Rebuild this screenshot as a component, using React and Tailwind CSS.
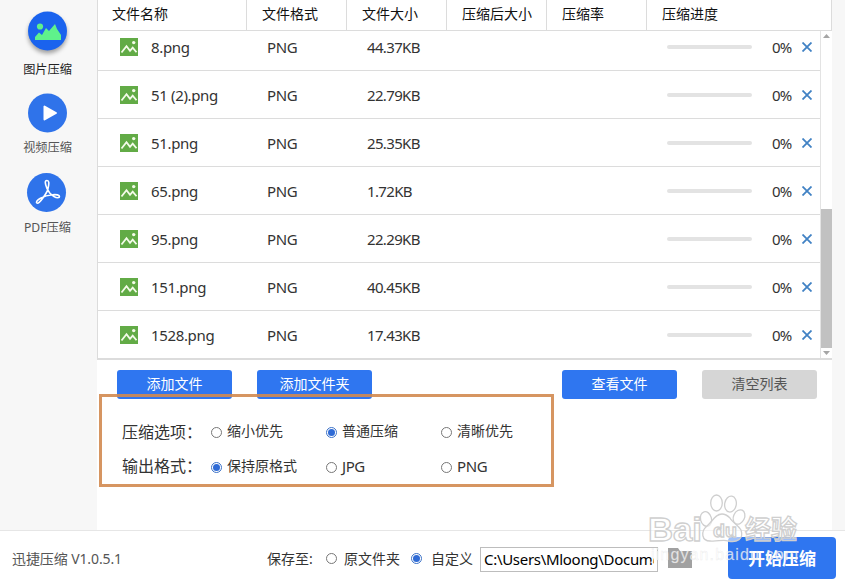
import React from "react";

const files = [
  ["8.png", "44.37KB"],
  ["51 (2).png", "22.79KB"],
  ["51.png", "25.35KB"],
  ["65.png", "1.72KB"],
  ["95.png", "22.29KB"],
  ["151.png", "40.45KB"],
  ["1528.png", "17.43KB"],
];

function FileIcon() {
  return (
    <svg width="18" height="18" viewBox="0 0 18 18" className="block shrink-0">
      <rect width="18" height="18" fill="#62ab46" />
      <path d="M1.5 14.5 L6.5 8.3 L10 12.8 L12.7 9.6 L16.5 14.3" fill="none" stroke="#f4fbe9" strokeWidth="1.8" />
      <circle cx="13.7" cy="4.6" r="1.7" fill="#f4fbe9" />
    </svg>
  );
}

function FileRow({ name, size, first, last }) {
  return (
    <div
      className={
        "flex shrink-0 items-center border-[#dcdcdc] text-[15px] tracking-[-0.45px] text-[#333] " +
        (first ? "h-10 pb-[7px] border-b" : last ? "h-12" : "h-12 border-b")
      }
    >
      <div className="flex w-[169px] items-center gap-[13px] pl-[22px]">
        <FileIcon />
        <span className="whitespace-pre tracking-[-0.35px]">{name}</span>
      </div>
      <div className="w-[100px] tracking-[-0.4px]">PNG</div>
      <div className="w-[300px] tracking-[-0.65px]">{size}</div>
      <div className="mr-5 h-1 w-[85px] rounded-full bg-[#e3e3e3]" />
      <div className="w-[30px] tracking-[-0.9px]">0%</div>
      <svg width="10" height="10" viewBox="0 0 10 10" className="block">
        <path d="M0.5 0.5 L9.5 9.5 M9.5 0.5 L0.5 9.5" stroke="#4182c4" strokeWidth="1.8" />
      </svg>
    </div>
  );
}

function Radio({ checked }) {
  return (
    <span
      className={
        "flex h-[11px] w-[11px] shrink-0 items-center justify-center rounded-full border bg-white " +
        (checked ? "border-[#3b72c8]" : "border-[#777]")
      }
    >
      {checked && <span className="h-[7px] w-[7px] rounded-full bg-[#2f6bd6]" />}
    </span>
  );
}

function Option({ label, checked, latin }) {
  return (
    <div className="flex w-[115px] shrink-0 items-center gap-[5px] whitespace-nowrap">
      <Radio checked={checked} />
      <span className={"-mt-0.5 " + (latin ? "text-[15px] tracking-[-0.4px]" : "text-[14px]")}>{label}</span>
    </div>
  );
}

function HeaderCell({ children, className }) {
  return <div className={"flex h-[30px] items-center border-[#dcdcdc] pb-0.5 " + className}>{children}</div>;
}

function Button({ children, className }) {
  return (
    <div className={"flex h-[29px] w-[115px] items-center justify-center rounded-[3px] pb-0.5 text-[14px] " + className}>
      {children}
    </div>
  );
}

function SideItem({ label, children, className }) {
  return (
    <div className={"flex h-20 flex-col items-center text-[12.2px] " + className}>
      {children}
      <span className="pt-px pl-px leading-4">{label}</span>
    </div>
  );
}

function Watermark() {
  return (
    <svg
      width="170"
      height="90"
      viewBox="0 0 170 90"
      className="pointer-events-none absolute left-[640px] top-[490px]"
      fontFamily='"Liberation Sans", "Noto Sans CJK SC", sans-serif'
    >
      <g fill="#ffffff" fillOpacity="0.55" stroke="#cfcfcf" strokeWidth="1.3" fontWeight="bold">
        <ellipse cx="66" cy="29" rx="5.5" ry="7.5" transform="rotate(-15 66 29)" />
        <ellipse cx="76.500" cy="13" rx="5.800" ry="8" />
        <ellipse cx="90.500" cy="14" rx="5.800" ry="8" transform="rotate(10 90 14)" />
        <ellipse cx="99" cy="27" rx="5.500" ry="7.5" transform="rotate(25 99 27)" />
        <path d="M82 24 C75 24 73 31 67 36 C60 42 62 51 70 51 C77 52 83 49 88 51 C97 53 104 49 101 40 C98 35 92 32 90 28 C87 25 85 24 82 24Z" />
        <text x="8" y="51" fontSize="33" textLength="54" lengthAdjust="spacingAndGlyphs">Bai</text>
        <text x="73" y="47" fontSize="19" textLength="24" lengthAdjust="spacingAndGlyphs">du</text>
        <text x="105" y="49" fontSize="26" textLength="52" lengthAdjust="spacingAndGlyphs">经验</text>
      </g>
      <text x="11" y="70" fontSize="16" fill="#ffffff" fillOpacity="0.75" stroke="#cccccc" strokeOpacity="0.35" strokeWidth="0.5" textLength="147">
        jingyan.baidu.com
      </text>
    </svg>
  );
}

export default function App() {
  return (
    <div className="relative flex h-[585px] w-[845px] flex-col overflow-hidden bg-white font-['Noto_Sans','Noto_Sans_CJK_SC',sans-serif] leading-5 text-[#333]">
      <div className="flex h-[530px] bg-[#f7f7f7]">
        <aside className="w-[97px] shrink-0 pt-[11px] pr-[3px]">
          <SideItem label="图片压缩" className="text-[#222]">
            <svg width="46" height="50" viewBox="0 0 46 50">
              <circle cx="23.500" cy="20" r="19.500" fill="#1a63ee" className="drop-shadow-[0_3px_2px_rgba(0,0,0,0.35)]" />
              <circle cx="16" cy="15.500" r="3.100" fill="#5ff28b" />
              <path d="M11 29 V26 L15 21.500 L18 24 L22 17 L25 20 L31 13 L33 18 L37 24 V29Z" fill="#5ff28b" />
            </svg>
          </SideItem>
          <SideItem label="视频压缩" className="text-[#555]">
            <svg width="46" height="48" viewBox="0 0 46 48">
              <circle cx="23.500" cy="22" r="19.500" fill="#2f73ea" />
              <path d="M20.500 15.500 V28.500 L32 22Z" fill="#fff" stroke="#fff" strokeWidth="2" strokeLinejoin="round" />
            </svg>
          </SideItem>
          <SideItem label="PDF压缩" className="text-[#555]">
            <svg width="46" height="48" viewBox="0 0 46 48">
              <circle cx="22.500" cy="21.500" r="19.500" fill="#2f73ea" />
              <g fill="none" stroke="#fff" strokeWidth="1.600" strokeLinejoin="round" strokeLinecap="round">
                <path d="M23.800 18.500 C25.500 11.500 25 9.500 23 9.500 C20.500 9.500 21 12.500 23 17.500 C24.500 21 26.500 23.500 30 25.500 C33 27.500 35.500 27 35.500 25.500 C35.500 24 32.500 23.300 28.500 23.700 C24.500 24 20 25.300 16.500 27.300 C13 29.300 11.800 31 12.800 32 C14 33 16 31 18.500 27.500 C21 24 23 21.500 23.800 18.500Z" />
              </g>
            </svg>
          </SideItem>
        </aside>

        <main className="flex w-[735px] shrink-0 flex-col bg-white">
          <section className="flex h-[360px] flex-col border-b-2 border-l border-[#dcdcdc]">
            <div className="flex h-[31px] shrink-0 border-b border-r border-[#dcdcdc] text-[14px] text-[#111]">
              <HeaderCell className="w-[149px] border-r pl-[14px]">文件名称</HeaderCell>
              <HeaderCell className="w-[100px] border-r pl-[15px]">文件格式</HeaderCell>
              <HeaderCell className="w-[100px] border-r pl-[15px]">文件大小</HeaderCell>
              <HeaderCell className="w-[100px] border-r pl-[15px]">压缩后大小</HeaderCell>
              <HeaderCell className="w-[100px] border-r pl-[15px]">压缩率</HeaderCell>
              <HeaderCell className="flex-1 pl-[15px]">压缩进度</HeaderCell>
            </div>
            <div className="flex h-[327px]">
              <div className="flex w-[723px] shrink-0 flex-col border-r border-[#e3e3e3]">
                {files.map(([name, size], i) => (
                  <FileRow key={name} name={name} size={size} first={i === 0} last={i === files.length - 1} />
                ))}
              </div>
              <div className="flex w-[11px] flex-col items-center justify-between bg-white pt-[3px]">
                <svg width="7" height="4" viewBox="0 0 7 4"><path d="M0 4 L3.500 0 L7 4Z" fill="#a5a5a5" /></svg>
                <div className="mt-auto h-[139px] w-full bg-[#c1c1c1]" />
                <svg width="7" height="10" viewBox="0 0 7 10"><path d="M0 3 L3.500 7 L7 3Z" fill="#a5a5a5" /></svg>
              </div>
            </div>
          </section>

          <div className="flex pl-5 pt-[10px] text-white">
            <Button className="mr-[25px] bg-[#2f76f0]">添加文件</Button>
            <Button className="mr-[190px] bg-[#2f76f0]">添加文件夹</Button>
            <Button className="mr-[25px] bg-[#2f76f0]">查看文件</Button>
            <Button className="bg-[#d6d6d6] text-[#555]">清空列表</Button>
          </div>

          <div className="relative -mt-[5px] ml-0.5 flex h-[93px] w-[455px] flex-col gap-[15px] border-[3px] border-[#d18a50]/90 pl-5 pt-[25px]">
            <div className="flex h-5 items-center">
              <span className="w-[89px] shrink-0 whitespace-nowrap text-[16px]">压缩选项：</span>
              <Option label="缩小优先" />
              <Option label="普通压缩" checked />
              <Option label="清晰优先" />
            </div>
            <div className="flex h-5 items-center">
              <span className="-mt-0.5 w-[89px] shrink-0 whitespace-nowrap text-[16px]">输出格式：</span>
              <Option label="保持原格式" checked />
              <Option label="JPG" latin />
              <Option label="PNG" latin />
            </div>
          </div>
        </main>
      </div>

      <footer className="flex h-[55px] items-center border-t border-[#e6e6e6] bg-white pl-3 text-[14px]">
        <span className="w-[255px] pt-0.5 tracking-[-0.1px] text-[#555]">迅捷压缩 V1.0.5.1</span>
        <span className="w-[59px] pt-0.5">保存至:</span>
        <Radio />
        <span className="ml-[7px] mr-[11px] pt-0.5">原文件夹</span>
        <Radio checked />
        <span className="ml-[9px] w-[49px] pt-0.5">自定义</span>
        <div className="mt-0.5 flex h-[25px] w-[178px] items-center border border-[#bdbdbd] pl-[3px] pr-[3px] text-[15px] text-black">
          <span className="overflow-hidden whitespace-nowrap tracking-[-0.3px]">C:\Users\Mloong\Docume</span>
        </div>
        <svg width="24" height="20" viewBox="0 0 24 20" className="ml-[10px] mr-[36px]">
          <path d="M0 0 H10 L12 3 H24 V20 H0Z" fill="#a1a1a1" />
        </svg>
        <div className="flex h-[42px] w-[108px] items-center justify-center rounded bg-[#2f76f0] pt-0.5 text-[17px] font-bold text-white">
          开始压缩
        </div>
      </footer>
      <Watermark />
    </div>
  );
}
